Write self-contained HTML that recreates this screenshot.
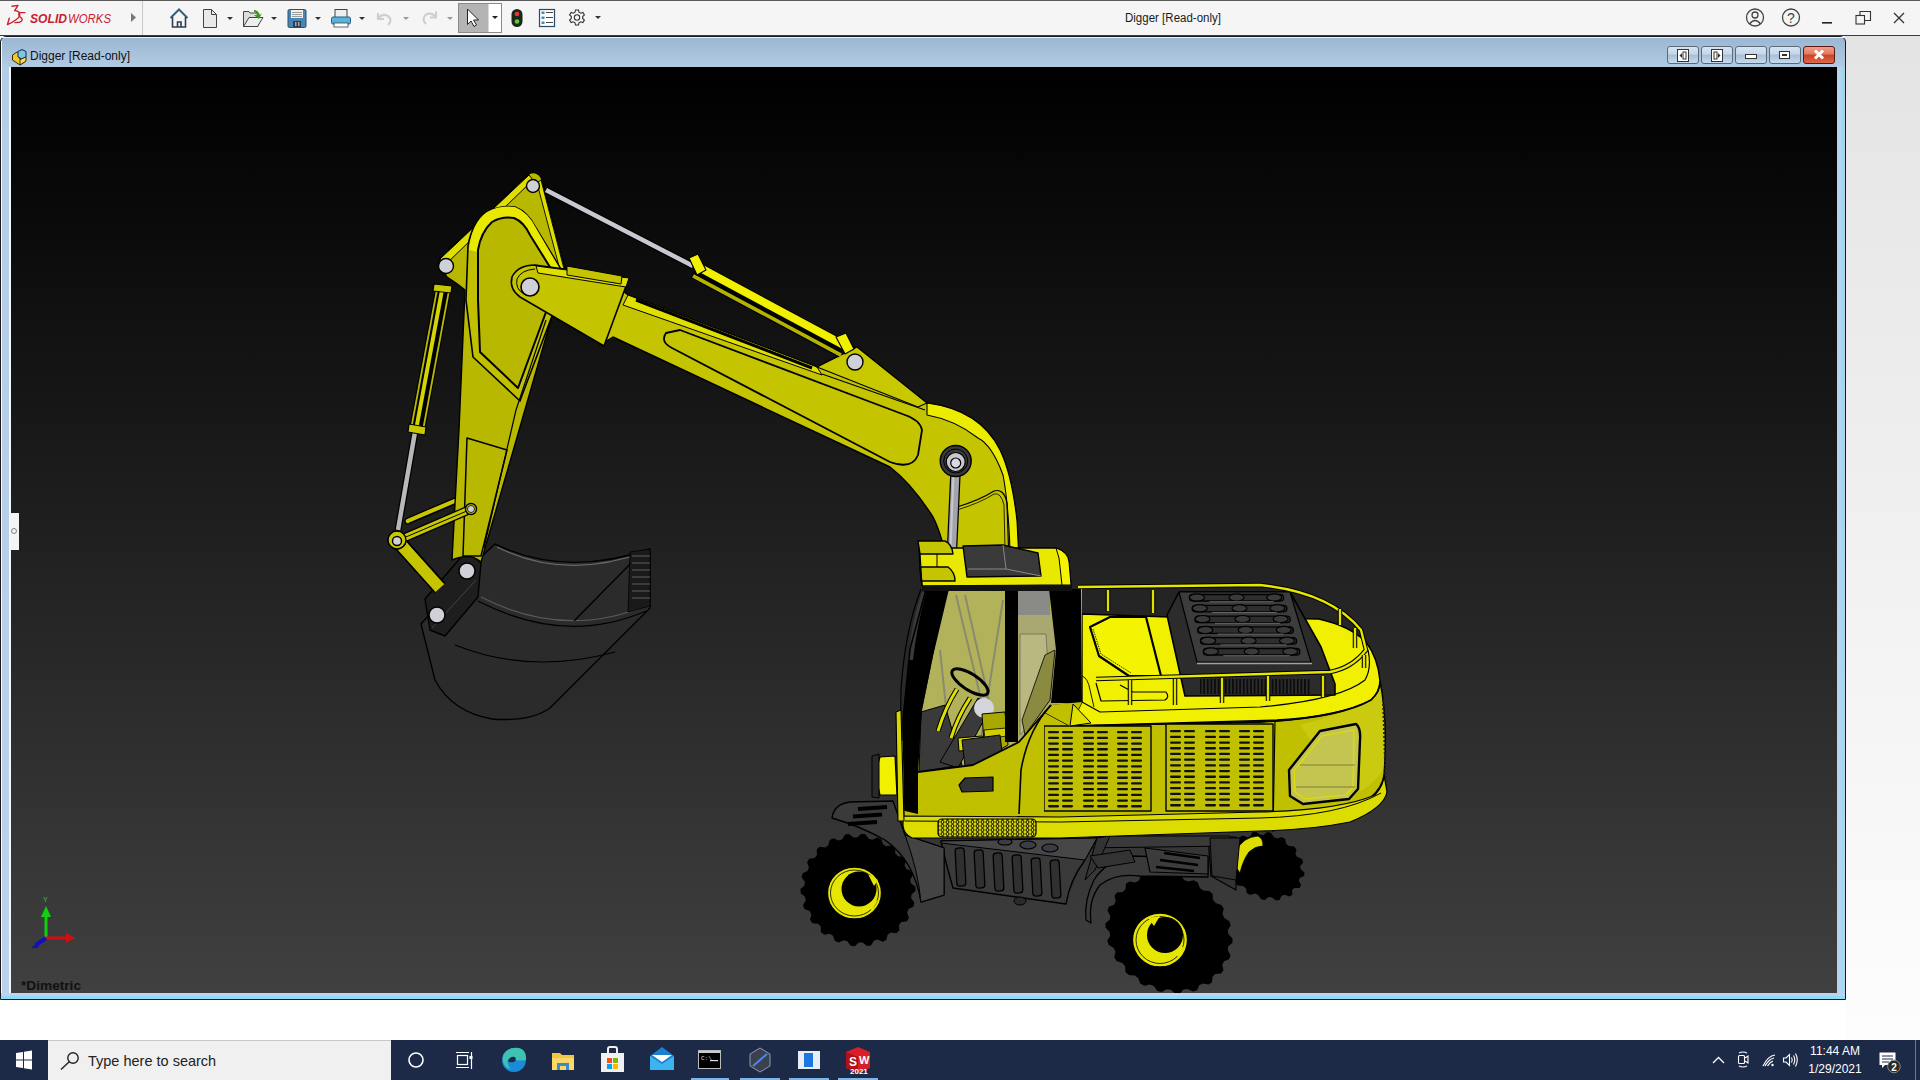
<!DOCTYPE html>
<html><head><meta charset="utf-8">
<style>
*{margin:0;padding:0;box-sizing:border-box}
html,body{width:1920px;height:1080px;overflow:hidden;background:#fff;font-family:"Liberation Sans",sans-serif}
.abs{position:absolute}
#top{left:0;top:0;width:1920px;height:36px;background:#f5f5f5;border-bottom:1px solid #3c3c3c}
#rightgray{left:1845px;top:36px;width:75px;height:1004px;background:linear-gradient(#e4e4e4,#fdfdfd)}
#frame{left:0;top:36px;width:1846px;height:964px;background:linear-gradient(#9ab6d2 0px,#b4cce4 31px,#bcd2ea 100%);border:1px solid #1a1a1a;border-radius:6px 6px 0 0}
#vp{left:11px;top:67px;width:1826px;height:926px;background:linear-gradient(#000 0%,#1c1c1c 45%,#404040 100%);overflow:hidden}
#task{left:0;top:1040px;width:1920px;height:40px;background:#1c2a48}
.t{position:absolute;white-space:nowrap}
</style></head><body>
<div id="rightgray" class="abs"></div>
<div id="top" class="abs">
<svg class="abs" style="left:0;top:0" width="1920" height="36" viewBox="0 0 1920 36">
<rect x="0" y="0" width="1920" height="1" fill="#5a5a5a"/>
<!-- 3DS logo -->
<g fill="none" stroke="#c8202e" stroke-width="1.4" stroke-linecap="round" stroke-linejoin="round">
<path d="M12,6.2 L18,5.4 L14.8,10.4"/>
<path d="M14.8,10.6 Q20.5,11 19.6,15.6 Q18.5,19.5 7.4,24.6 L9.3,18.2"/>
<path d="M25,12.6 L20.3,12.6 Q17.6,13.6 19.6,16.4 L21.8,18.4 Q23,21 19.6,22.2 L15,22.6"/>
</g>
<text x="30" y="23" font-family="Liberation Sans" font-weight="bold" font-style="italic" font-size="13.5" fill="#c8202e" textLength="37" lengthAdjust="spacingAndGlyphs">SOLID</text>
<text x="68" y="23" font-family="Liberation Sans" font-style="italic" font-size="13.5" fill="#c8202e" textLength="43" lengthAdjust="spacingAndGlyphs">WORKS</text>
<path d="M131,13 L136,17.5 L131,22 Z" fill="#777"/>
<rect x="142" y="1" width="1" height="34" fill="#c8c8c8"/>
<!-- home -->
<g fill="none" stroke="#2d3e50" stroke-width="1.6">
<path d="M170.5,18 L179,9.5 L187.5,18" stroke="#34607f" stroke-width="2"/>
<path d="M172.5,17 V27 H185.5 V17"/>
<path d="M177.5,27 V22 H181 V27"/>
</g>
<!-- new doc -->
<path d="M203.5,9.5 H211.5 L216.5,14.5 V27.5 H203.5 Z" fill="#e9e9e9" stroke="#444" stroke-width="1"/>
<path d="M211.5,9.5 V14.5 H216.5" fill="none" stroke="#444" stroke-width="1"/>
<path d="M227,17 L233,17 L230,20 Z" fill="#333"/>
<!-- open -->
<path d="M243.5,11.5 H249 L250,13 H258 V26.5 H243.5 Z" fill="#ddd" stroke="#444"/>
<path d="M243.5,26.5 L249,17.5 H263 L257.5,26.5 Z" fill="#eee" stroke="#444"/>
<path d="M254,10 Q258,10 260,15 L262,13 L259,19 L254,15 L257,15 Q256,12 254,12 Z" fill="#3a9a1a"/>
<path d="M271,17 L277,17 L274,20 Z" fill="#333"/>
<!-- save -->
<rect x="288" y="9.5" width="18" height="18" rx="1.5" fill="#4a86b4" stroke="#2c4f6e"/>
<rect x="291" y="10" width="12" height="8" fill="#f0f0f0"/>
<path d="M292,12.5 H302 M292,14.5 H302 M292,16.5 H302" stroke="#888" stroke-width="0.8"/>
<rect x="293" y="21" width="8" height="6" fill="#2c3e50"/>
<rect x="295" y="22" width="1.5" height="4" fill="#aaa"/><rect x="298" y="22" width="1.5" height="4" fill="#aaa"/>
<path d="M315,17 L321,17 L318,20 Z" fill="#333"/>
<!-- print -->
<rect x="335" y="9.5" width="12" height="8" fill="#eee" stroke="#444"/>
<rect x="331.5" y="17" width="19" height="7" rx="1.5" fill="#58b4dc" stroke="#2a5e80"/>
<rect x="334" y="23" width="14" height="4" fill="#fff" stroke="#444" stroke-width="0.8"/>
<path d="M359,17 L365,17 L362,20 Z" fill="#333"/>
<!-- undo -->
<path d="M378,13 L378,19 L384,19 M378.5,18.5 Q382,13 388,16 Q393,20 388,25" fill="none" stroke="#cfcfcf" stroke-width="2.2"/>
<path d="M403,17 L409,17 L406,20 Z" fill="#999"/>
<!-- redo -->
<path d="M436,11.5 L436,17.5 L430,17.5 M435.5,17 Q432,12 426,14.5 Q421,19 426,24" fill="none" stroke="#cfcfcf" stroke-width="2.2"/>
<path d="M447,17 L453,17 L450,20 Z" fill="#999"/>
<!-- select -->
<rect x="458.5" y="3.5" width="43" height="29" fill="#fff" stroke="#8a8a8a"/>
<rect x="459" y="4" width="29.5" height="28" fill="#b4b4b4"/>
<path d="M467.5,9 V24.5 L471,21 L474,26.5 L476.5,25 L473.5,20 L478.5,20 Z" fill="#fff" stroke="#222" stroke-width="1"/>
<path d="M492,16 L498,16 L495,19 Z" fill="#222"/>
<!-- traffic light -->
<rect x="511.5" y="9" width="11" height="18" rx="5.5" fill="#1a2a1a"/>
<circle cx="517" cy="14" r="2.3" fill="#e33"/>
<circle cx="517" cy="21.5" r="2.3" fill="#6c3"/>
<!-- options list -->
<rect x="539.5" y="9.5" width="15" height="17" fill="#fff" stroke="#2a4a6a" stroke-width="1.2"/>
<rect x="541.5" y="11.5" width="3" height="2.5" fill="#4a8ab4"/><rect x="541.5" y="16.5" width="3" height="2.5" fill="#4a8ab4"/><rect x="541.5" y="21.5" width="3" height="2.5" fill="#4a8ab4"/>
<path d="M546,12.5 H553 M546,17.5 H553 M546,22.5 H553" stroke="#333" stroke-width="0.9"/>
<!-- gear -->
<g transform="translate(577,17.5)" fill="none" stroke="#333" stroke-width="1.1">
<path d="M-1.5,-7.5 H1.5 L2,-5.3 L3.8,-4.3 L5.9,-5.1 L7.4,-2.5 L5.7,-1 V1 L7.4,2.5 L5.9,5.1 L3.8,4.3 L2,5.3 L1.5,7.5 H-1.5 L-2,5.3 L-3.8,4.3 L-5.9,5.1 L-7.4,2.5 L-5.7,1 V-1 L-7.4,-2.5 L-5.9,-5.1 L-3.8,-4.3 L-2,-5.3 Z"/>
<circle r="2.7"/>
</g>
<path d="M595,16 L601,16 L598,19 Z" fill="#333"/>
<!-- title -->
<text x="1125" y="22" font-family="Liberation Sans" font-size="12.5" fill="#1a1a1a" textLength="96" lengthAdjust="spacingAndGlyphs">Digger [Read-only]</text>
<!-- user -->
<g fill="none" stroke="#444" stroke-width="1.3">
<circle cx="1755" cy="17.5" r="8.5"/>
<circle cx="1755" cy="15" r="3"/>
<path d="M1749.5,24 Q1755,17 1760.5,24"/>
<circle cx="1791" cy="17.5" r="8.5"/>
</g>
<text x="1791" y="22.5" text-anchor="middle" font-family="Liberation Sans" font-size="14" fill="#444">?</text>
<rect x="1822" y="22" width="10" height="1.6" fill="#222"/>
<g fill="none" stroke="#333" stroke-width="1.1">
<rect x="1856" y="15.5" width="8.5" height="8.5"/>
<path d="M1860,15.5 V11.5 H1870.5 V20.5 H1864.5"/>
<path d="M1894,13 L1904,23 M1904,13 L1894,23" stroke-width="1.3"/>
</g>
</svg>
</div>
<div id="frame" class="abs">
<svg class="abs" style="left:-1px;top:-1px" width="1846" height="40" viewBox="0 0 1846 40">
<defs>
<linearGradient id="closeg" x1="0" y1="0" x2="0" y2="1"><stop offset="0" stop-color="#f0a090"/><stop offset="0.45" stop-color="#e07a60"/><stop offset="0.5" stop-color="#c84420"/><stop offset="1" stop-color="#e06a50"/></linearGradient>
<linearGradient id="btng" x1="0" y1="0" x2="0" y2="1"><stop offset="0" stop-color="#d8e6f4"/><stop offset="0.45" stop-color="#c4d6ea"/><stop offset="0.5" stop-color="#a8bed6"/><stop offset="1" stop-color="#c8dcf0"/></linearGradient>
</defs>
<rect x="1" y="1" width="1844" height="1" fill="#e8f2fb"/>
<!-- part icon -->
<g transform="translate(11,49) translate(0,-37)">
<path d="M1.5,7 L6,4 L9,5.5 L9,11.5 L13.5,14 L9,17 L1.5,12 Z" fill="#f2c82a" stroke="#3a2a00" stroke-width="1"/>
<path d="M7,3.5 L11,1.5 L15,3.5 L15,9 L11,11 L7,9 Z" fill="#7cc8e0" stroke="#0a2a6a" stroke-width="1"/>
<path d="M9,11.5 L15,9 L15,13 L9,17 Z" fill="#f8e060" stroke="#3a2a00" stroke-width="1"/>
</g>
<text x="30" y="23.5" font-family="Liberation Sans" font-size="12.5" fill="#111" textLength="100" lengthAdjust="spacingAndGlyphs">Digger [Read-only]</text>
<g id="mdibtns" stroke="#5a6a7a" stroke-width="1">
<rect x="1667.5" y="10.5" width="31" height="17" rx="2.5" fill="url(#btng)"/>
<rect x="1701.5" y="10.5" width="31" height="17" rx="2.5" fill="url(#btng)"/>
<rect x="1735.5" y="10.5" width="31" height="17" rx="2.5" fill="url(#btng)"/>
<rect x="1769.5" y="10.5" width="31" height="17" rx="2.5" fill="url(#btng)"/>
<rect x="1803.5" y="10.5" width="31" height="17" rx="2.5" fill="url(#closeg)" stroke="#5a1a10"/>
</g>
<g fill="#fff" stroke="#333" stroke-width="1">
<rect x="1677.5" y="13.5" width="11" height="12"/>
<rect x="1711.5" y="13.5" width="11" height="12"/>
<rect x="1745.5" y="18.5" width="11" height="4"/>
<rect x="1779.5" y="15.5" width="10" height="7"/>
</g>
<g fill="#333">
<path d="M1682,17 L1679.5,19.5 L1682,22 Z"/><rect x="1683" y="16" width="3" height="7" fill="none" stroke="#333" stroke-width="1"/>
<path d="M1718,17 L1720.5,19.5 L1718,22 Z"/><rect x="1714" y="16" width="3" height="7" fill="none" stroke="#333" stroke-width="1"/>
<rect x="1782" y="18" width="5" height="2"/>
</g>
<path d="M1815,14.5 L1823,22.5 M1823,14.5 L1815,22.5" stroke="#fff" stroke-width="3"/>
</svg>
<div class="abs" style="left:0;top:4px;width:1px;height:956px;background:#f4fcff"></div>
<div class="abs" style="left:8px;top:30px;width:2px;height:927px;background:#eef8ff"></div>
<div class="abs" style="left:0;top:956px;width:1844px;height:4px;background:linear-gradient(#c4d0f0,#c0d4f0)"></div>
<div class="abs" style="left:0;top:959px;width:1844px;height:3px;background:#90dcf8"></div>
<div class="abs" style="left:1833px;top:30px;width:9px;height:927px;background:linear-gradient(90deg,#bcd2ea,#b8d4ec 70%,#90dcf8)"></div>
</div>
<div id="vp" class="abs">
<svg class="abs" style="left:-11px;top:-67px" width="1920" height="1080" viewBox="0 0 1920 1080">
<defs>
<pattern id="slots" x="1047" y="729" width="17" height="5" patternUnits="userSpaceOnUse">
<rect x="1" y="1.2" width="6.5" height="2.2" rx="1" fill="#111"/>
<rect x="8.5" y="1.2" width="6.5" height="2.2" rx="1" fill="#111"/>
</pattern>
<pattern id="mesh" width="5" height="4" patternUnits="userSpaceOnUse">
<rect width="5" height="4" fill="#d8d800"/><circle cx="2.5" cy="2" r="1.5" fill="none" stroke="#000" stroke-width="1"/>
</pattern>
<pattern id="oval" x="1175" y="597" width="40" height="11" patternUnits="userSpaceOnUse">
<rect width="40" height="11" fill="#444"/><rect x="3" y="2" width="34" height="7" rx="3.5" fill="none" stroke="#111" stroke-width="1.3"/>
</pattern>
<pattern id="vslat" width="3.6" height="20" patternUnits="userSpaceOnUse">
<rect width="3.6" height="20" fill="#2c2c2c"/><rect x="1" width="1.5" height="20" fill="#050505"/>
</pattern>
</defs>
<g stroke="#000" stroke-width="1.4" stroke-linejoin="round">

<!-- ===== BUCKET ===== -->
<path d="M495,544 Q565,578 650,549 L650,608 L550,708 Q530,722 492,719 Q452,712 435,680 L421,624 L478,560 Z" fill="#2b2b2b"/>
<path d="M497,547 Q565,581 645,552" fill="none" stroke="#6a6a6a" stroke-width="1.2"/>
<path d="M481,597 Q565,640 648,605" fill="none" stroke="#5a5a5a" stroke-width="1.2"/>
<path d="M478,601 Q565,646 646,611" fill="none" stroke="#000" stroke-width="1.3"/>
<path d="M455,645 Q530,675 615,652" fill="none" stroke="#000" stroke-width="1.2"/>
<path d="M574,621 L642,552" fill="none" stroke="#000" stroke-width="1.4"/>
<path d="M630,552 L650,549 L650,606 L628,612 Z" fill="#1a1a1a" stroke="#000" stroke-width="0.8"/>
<path d="M632,556 H650 M632,563 H650 M632,570 H650 M632,577 H650 M632,584 H650 M632,591 H650 M632,598 H650" stroke="#666" stroke-width="0.9"/>
<!-- bucket link block -->
<path d="M425,599 L462,556 Q472,552 481,563 L478,597 L445,636 L430,630 Z" fill="#1e1e1e"/>
<path d="M432,628 L476,580" stroke="#444" stroke-width="1" fill="none"/>
<circle cx="467" cy="571" r="8" fill="#d0d0d8" stroke="#000" stroke-width="1.5"/>
<circle cx="437" cy="615" r="8" fill="#d0d0d8" stroke="#000" stroke-width="1.5"/>

<!-- ===== STICK CYLINDER (left) ===== -->
<path d="M398,530 L415,432" stroke="#000" stroke-width="7" fill="none"/>
<path d="M398,530 L415,432" stroke="#b8b8b8" stroke-width="4.5" fill="none"/>
<path d="M443,290 L417,430" stroke="#000" stroke-width="16" fill="none"/>
<path d="M442,290 L416,430" stroke="#d4d400" stroke-width="4" fill="none"/>
<path d="M437.1,289 L411.1,429" stroke="#b8b800" stroke-width="1.8" fill="none"/>
<path d="M448.9,291 L422.9,431" stroke="#b8b800" stroke-width="1.8" fill="none"/>
<path d="M434,284 L452,286 L451,293 L433,291 Z" fill="#c8c800" stroke-width="1.2"/>
<path d="M409,424 L426,427 L425,435 L408,432 Z" fill="#c8c800" stroke-width="1.2"/>
<!-- link bars -->
<path d="M408,521 L455,501" stroke="#000" stroke-width="7" fill="none" stroke-linecap="round"/>
<path d="M408,521 L455,501" stroke="#c8c800" stroke-width="4.5" fill="none" stroke-linecap="round"/>
<path d="M409,523 L455,503.5" stroke="#000" stroke-width="0.8" fill="none"/>
<path d="M397,540 L440,588" stroke="#000" stroke-width="15" fill="none"/>
<path d="M397,540 L440,588" stroke="#c4c400" stroke-width="12" fill="none"/>
<path d="M402,536 L444,583" stroke="#000" stroke-width="1.2" fill="none"/>
<circle cx="397" cy="540" r="9" fill="#c8c800" stroke="#000"/>
<circle cx="397" cy="541" r="4.5" fill="#d0d0d8" stroke="#000"/>

<!-- ===== STICK ===== -->
<path d="M529,174 Q535,170 541,177 L565,269 L552,316 L481,562 Q470,552 452,560 L459,430 L465,290 Q458,284 447,277 L438,264 L440,258 Z" fill="#b8b800"/>
<path d="M440,259 L529,175 L533,180 L445,265 Z" fill="#dede00" stroke-width="1"/>
<path d="M541,180 L564,269 L560,270 L537,183 Z" fill="#dede00" stroke-width="0.9"/>
<path d="M466,300 L468,246 Q472,222 487,212 Q500,205 515,207 Q528,212 536,228 L562,271 L552,316 L521,398 L520,401 L473,357 Z" fill="#c0c000" stroke-width="1.6"/>
<path d="M469,250 Q472,222 487,212 Q500,205 515,207 Q528,212 536,228 L560,269 L553,272 L530,235 Q524,222 514,218 Q502,216 492,222 Q481,232 478,252 Z" fill="#e8e800" stroke="none"/>
<path d="M478,300 L478,250 Q481,232 492,222 Q502,216 514,218 Q524,222 530,235 L553,272 L546,312 L518,388 L480,352 Z" fill="#b8b800" stroke-width="2"/>

<path d="M467,438 L507,450 L481,556 L463,556 Z" fill="#b8b800" stroke-width="1.5"/>
<path d="M546,320 L516,410 L484,548" fill="none" stroke-width="1.2"/>
<circle cx="533" cy="186" r="6.5" fill="#d0d0d8" stroke="#000"/>
<circle cx="446" cy="266" r="7.5" fill="#d0d0d8" stroke="#000"/>
<path d="M397,541 L471,509" stroke="#000" stroke-width="9" fill="none" stroke-linecap="round"/>
<path d="M397,541 L471,509" stroke="#c8c800" stroke-width="6.5" fill="none" stroke-linecap="round"/>
<path d="M400,539.5 L468,510.5" stroke="#000" stroke-width="1" fill="none"/>
<circle cx="471" cy="509" r="5.5" fill="#c8c800" stroke="#000"/>
<circle cx="471" cy="509" r="3.5" fill="#d0d0d8" stroke="#000" stroke-width="0.8"/>
<circle cx="397" cy="540" r="9" fill="#c8c800" stroke="#000"/>
<circle cx="397" cy="541" r="4.5" fill="#d0d0d8" stroke="#000"/>

<!-- ===== BOOM CYLINDER ROD ===== -->
<path d="M546,190 L693,266" stroke="#000" stroke-width="7" fill="none"/>
<path d="M546,190 L693,266" stroke="#c8c8d0" stroke-width="4.5" fill="none"/>

<!-- ===== BOOM ===== -->
<path d="M600,272 L628,295 L817,367 L857,347 L927,403 Q980,410 1000,450 Q1012,475 1017,521 L1019,560 L947,560 Q940,530 933,517 Q912,484 890,467 L613,337 L600,345 Z" fill="#c4c400"/>
<path d="M628,295 L817,367 L822,375 L623,305 Z" fill="#e0e000" stroke-width="1"/>
<path d="M636,300 L812,368" fill="none" stroke-width="3"/>
<path d="M817,367 L857,347 L927,403 L918,407 Z" fill="#c8c800" stroke-width="1.2"/>
<path d="M822,374 L925,410" fill="none" stroke-width="1.2"/>
<path d="M666,333 Q660,342 672,348 L890,462 Q912,470 918,455 L922,430 Q920,420 905,415 L680,330 Z" fill="none" stroke-width="1.8"/>
<path d="M927,403 Q980,410 1000,450 Q1012,475 1017,521 L1019,560 L1010,560 L1010,549 Q1008,500 1003,475 Q992,445 978,438 Q955,420 927,415 Z" fill="#ecec00" stroke-width="1.1"/>
<path d="M957,507 Q980,500 994,491 Q1004,488 1007,503 L1008.5,548" fill="none" stroke-width="1.2"/>
<path d="M957,510 Q980,503 994,494 Q1001,492 1004,505 L1005,548" fill="none" stroke-width="0.8"/>
<circle cx="855" cy="362" r="8" fill="#d0d0d8" stroke="#000"/>
<!-- boom joint piece -->
<path d="M535,265 L629,278 L604,346 L520,297 Q509,289 512,277 Q518,265 535,265 Z" fill="#c4c400" stroke-width="1.6"/>
<path d="M535,269 Q521,270 517,279 Q515,289 524,294" fill="none" stroke-width="1"/>
<path d="M536,266 L629,278 L626,287 L538,273 Z" fill="#dede00" stroke-width="1"/>
<path d="M567,266 L622,276 L621,284 L567,275 Z" fill="#c4c400" stroke-width="1"/>
<circle cx="530" cy="287" r="9" fill="#d0d0d8" stroke="#000" stroke-width="1.6"/>
<!-- boom cylinder barrel -->
<path d="M695,270 L843,349.5" stroke="#000" stroke-width="18" fill="none"/>
<path d="M697,266.3 L845,345.8" stroke="#f0f000" stroke-width="8" fill="none"/>
<path d="M693,275.8 L841,355.2" stroke="#b4b400" stroke-width="3.6" fill="none"/>
<path d="M689,258 L698,254 L706,270 L697,275 Z" fill="#f0f000" stroke-width="1.2"/>
<path d="M836,337 L846,333 L854,349 L845,354 Z" fill="#f0f000" stroke-width="1.2"/>
<!-- swing cylinder -->
<path d="M955.5,472 L952,550" stroke="#000" stroke-width="10.5" fill="none"/>
<path d="M955.5,472 L952,550" stroke="#a4a4ac" stroke-width="8" fill="none"/>
<path d="M953.5,474 L950.5,548" stroke="#c8c8d0" stroke-width="2" fill="none"/>
<circle cx="955.7" cy="461" r="15.5" fill="#3a3a3a" stroke="#000" stroke-width="1.4"/>
<circle cx="955.7" cy="461" r="12" fill="none" stroke="#000" stroke-width="1"/>
<circle cx="955.7" cy="462" r="9.5" fill="#c8c8d0" stroke="#000" stroke-width="1.2"/>
<circle cx="955.7" cy="463" r="5" fill="#d8d8e0" stroke="#000" stroke-width="1.2"/>
<!-- ===== UNDERCARRIAGE ===== -->
<!-- rear right wheel -->
<path d="M1208,837 L1236,837 L1236,890 L1211,876 Z" fill="#333" stroke-width="1.2"/>
<path d="M1301.1,885.2 L1299.4,887.9 L1294.2,888.0 L1292.1,890.1 L1292.4,894.8 L1289.5,896.6 L1284.4,894.8 L1281.4,895.9 L1279.6,900.0 L1276.0,900.6 L1271.7,897.3 L1268.3,897.1 L1264.8,900.1 L1261.1,899.3 L1258.2,894.9 L1254.9,893.6 L1250.2,895.0 L1246.8,892.9 L1245.9,888.2 L1243.2,885.9 L1237.9,885.4 L1235.5,882.5 L1236.6,878.1 L1235.0,875.2 L1230.0,872.9 L1228.8,869.5 L1231.8,866.1 L1231.4,863.1 L1227.5,859.4 L1227.8,856.1 L1232.2,854.2 L1233.2,851.4 L1230.9,846.8 L1232.6,844.1 L1237.8,844.0 L1239.9,841.9 L1239.6,837.2 L1242.5,835.4 L1247.6,837.2 L1250.6,836.1 L1252.4,832.0 L1256.0,831.4 L1260.3,834.7 L1263.7,834.9 L1267.2,831.9 L1270.9,832.7 L1273.8,837.1 L1277.1,838.4 L1281.8,837.0 L1285.2,839.1 L1286.1,843.8 L1288.8,846.1 L1294.1,846.6 L1296.5,849.5 L1295.4,853.9 L1297.0,856.8 L1302.0,859.1 L1303.2,862.5 L1300.2,865.9 L1300.6,868.9 L1304.5,872.6 L1304.2,875.9 L1299.8,877.8 L1298.8,880.6 Z" fill="#000" stroke="none"/>
<path d="M1258,836 Q1243,837 1236,851 Q1232,864 1240,873 Q1243,860 1249,852 Q1255,846 1263,846 Q1263,838 1258,836 Z" fill="#dede00" stroke-width="0.8"/>
<!-- axle beam -->
<path d="M1080,836 L1230,836 L1232,846 L1080,848 Z" fill="#3a3a3a" stroke-width="1"/>
<path d="M1210,838 L1240,838 L1236,880 L1212,876 Z" fill="#333" stroke-width="1"/>
<!-- chassis body -->
<path d="M941,841 L1097,838 L1085,860 Q1070,880 1066,904 L953,888 Q945,860 941,841 Z" fill="#3a3a3a"/>
<path d="M941,841 L1097,838 L1085,860 L941,843 Z" fill="#474747" stroke-width="1"/>
<g fill="#303030" stroke-width="1.3">
<rect x="956" y="848" width="9" height="38" rx="3" transform="rotate(-3 960 867)"/>
<rect x="975" y="850" width="9" height="38" rx="3" transform="rotate(-3 979 869)"/>
<rect x="994" y="853" width="9" height="38" rx="3" transform="rotate(-3 998 872)"/>
<rect x="1013" y="855" width="9" height="38" rx="3" transform="rotate(-3 1017 874)"/>
<rect x="1032" y="858" width="9" height="38" rx="3" transform="rotate(-3 1036 877)"/>
<rect x="1051" y="860" width="9" height="38" rx="3" transform="rotate(-3 1055 879)"/>
</g>
<ellipse cx="1028" cy="845" rx="8" ry="4" fill="#3c3c44" stroke-width="1.2"/>
<ellipse cx="1050" cy="848" rx="8" ry="4" fill="#3c3c44" stroke-width="1.2"/>
<ellipse cx="1005" cy="842" rx="7" ry="3" fill="#3c3c44" stroke-width="1.2"/>
<ellipse cx="1020" cy="901" rx="6" ry="4" fill="#2a2a2a" stroke-width="1"/>
<path d="M1097,838 L1110,836 L1095,870 L1085,880 Z" fill="#333" stroke-width="1"/>
<!-- left front wheel -->
<path d="M908.9,917.8 L906.9,921.2 L901.3,922.1 L899.0,925.0 L899.3,930.5 L896.3,933.2 L890.7,932.6 L887.6,934.7 L886.3,940.0 L882.7,941.7 L877.4,939.5 L873.8,940.7 L871.0,945.4 L867.0,946.0 L862.6,942.5 L858.8,942.6 L854.7,946.3 L850.6,945.8 L847.4,941.2 L843.6,940.2 L838.7,942.6 L834.9,941.0 L833.0,935.8 L829.7,933.8 L824.2,934.7 L820.9,932.1 L820.7,926.6 L818.0,923.8 L812.4,923.2 L810.0,919.8 L811.4,914.5 L809.6,911.1 L804.4,908.9 L803.0,905.1 L805.8,900.4 L805.1,896.7 L800.7,893.2 L800.5,889.1 L804.5,885.5 L804.9,881.7 L801.6,877.2 L802.6,873.3 L807.5,870.9 L808.9,867.4 L807.1,862.2 L809.1,858.8 L814.7,857.9 L817.0,855.0 L816.7,849.5 L819.7,846.8 L825.3,847.4 L828.4,845.3 L829.7,840.0 L833.3,838.3 L838.6,840.5 L842.2,839.3 L845.0,834.6 L849.0,834.0 L853.4,837.5 L857.2,837.4 L861.3,833.7 L865.4,834.2 L868.6,838.8 L872.4,839.8 L877.3,837.4 L881.1,839.0 L883.0,844.2 L886.3,846.2 L891.8,845.3 L895.1,847.9 L895.3,853.4 L898.0,856.2 L903.6,856.8 L906.0,860.2 L904.6,865.5 L906.4,868.9 L911.6,871.1 L913.0,874.9 L910.2,879.6 L910.9,883.3 L915.3,886.8 L915.5,890.9 L911.5,894.5 L911.1,898.3 L914.4,902.8 L913.4,906.7 L908.5,909.1 L907.1,912.6 Z" fill="#000" stroke="none"/>
<ellipse cx="854.5" cy="893" rx="27" ry="26" fill="#e6e600" stroke="#000" stroke-width="1.3"/>
<ellipse cx="854.5" cy="893" rx="24" ry="23" fill="none" stroke="#000" stroke-width="0.8"/>
<circle cx="859" cy="889" r="17.5" fill="#000" stroke="none"/>
<path d="M868,874 L878,880 L874,886 Z M866,907 L878,900 L872,910 Z" fill="#e6e600" stroke="none"/>
<!-- left fender -->
<path d="M832,818 Q834,804 850,802 L893,801 L905,835 L944,848 L944,895 L921,902 Q914,860 885,840 Q860,826 832,818 Z" fill="#3a3a3a"/>
<path d="M905,835 L944,848 L944,895 L921,902 Q918,870 905,835 Z" fill="#444" stroke-width="1"/>
<path d="M858,809 L887,807 M853,816.5 L882,814.5 M848,824 L877,822" stroke-width="4" fill="none"/>
<!-- right front wheel -->
<path d="M1223.5,970.3 L1221.0,973.6 L1215.3,974.1 L1212.5,976.8 L1212.0,982.2 L1208.6,984.6 L1202.8,983.5 L1199.2,985.3 L1197.1,990.2 L1193.0,991.5 L1187.5,988.9 L1183.4,989.6 L1179.9,993.6 L1175.4,993.7 L1170.8,989.8 L1166.5,989.2 L1161.8,992.0 L1157.4,990.9 L1153.9,986.0 L1149.8,984.4 L1144.3,985.7 L1140.2,983.4 L1138.2,978.0 L1134.7,975.4 L1128.8,975.1 L1125.4,971.9 L1125.1,966.3 L1122.3,962.9 L1116.6,961.1 L1114.2,957.2 L1115.5,951.9 L1113.7,948.0 L1108.6,944.8 L1107.3,940.5 L1110.2,936.0 L1109.6,931.9 L1105.5,927.5 L1105.5,923.2 L1109.7,919.8 L1110.3,915.9 L1107.5,910.7 L1108.8,906.8 L1114.0,904.7 L1115.8,901.3 L1114.5,895.7 L1117.0,892.4 L1122.7,891.9 L1125.5,889.2 L1126.0,883.8 L1129.4,881.4 L1135.2,882.5 L1138.8,880.7 L1140.9,875.8 L1145.0,874.5 L1150.5,877.1 L1154.6,876.4 L1158.1,872.4 L1162.6,872.3 L1167.2,876.2 L1171.5,876.8 L1176.2,874.0 L1180.6,875.1 L1184.1,880.0 L1188.2,881.6 L1193.7,880.3 L1197.8,882.6 L1199.8,888.0 L1203.3,890.6 L1209.2,890.9 L1212.6,894.1 L1212.9,899.7 L1215.7,903.1 L1221.4,904.9 L1223.8,908.8 L1222.5,914.1 L1224.3,918.0 L1229.4,921.2 L1230.7,925.5 L1227.8,930.0 L1228.4,934.1 L1232.5,938.5 L1232.5,942.8 L1228.3,946.2 L1227.7,950.1 L1230.5,955.3 L1229.2,959.2 L1224.0,961.3 L1222.2,964.7 Z" fill="#000" stroke="none"/>
<ellipse cx="1160" cy="940" rx="27.5" ry="27" fill="#e6e600" stroke="#000" stroke-width="1.3"/>
<ellipse cx="1160" cy="940" rx="24" ry="23.5" fill="none" stroke="#000" stroke-width="0.8"/>
<circle cx="1165" cy="935" r="18" fill="#000" stroke="none"/>
<path d="M1148,918 L1160,916 L1154,926 Z M1172,954 L1184,946 L1180,957 Z" fill="#e6e600" stroke="none"/>
<!-- right fender -->
<path d="M1091,923 Q1088,900 1100,885 Q1115,873 1140,876 L1208,877 L1208,858 L1130,856 Q1105,862 1094,880 Q1084,900 1086,920 Z" fill="#3a3a3a" stroke-width="1.3"/>
<path d="M1145,848 L1208,856 L1208,874 L1150,872 Z" fill="#3c3c3c" stroke-width="1.2"/>
<path d="M1164,853 L1200,858 M1160,860 L1198,865 M1156,867 L1194,871" stroke-width="2.5" fill="none"/>
<path d="M1090,856 L1130,850 L1135,862 L1098,868 Z" fill="#333" stroke-width="1"/>

<!-- ===== BODY ===== -->
<!-- side wall -->
<path d="M1044,712 L1070,726 L1260,722 Q1340,718 1371,700 Q1380,692 1380,681 Q1388,720 1384,775 Q1380,800 1340,813 L1260,818 L1060,822 L904,820 L901,740 Z" fill="#c0c000"/>
<path d="M1300,725 Q1360,710 1380,690 Q1386,730 1383,770 Q1370,790 1350,795 Z" fill="#caca10" stroke="none"/>
<!-- deck top + rim -->
<path d="M1082,614 L1169,617 L1319,619 Q1350,626 1366,642 Q1378,658 1380,681 Q1380,692 1371,700 Q1340,716 1277,720 L1070,726 L1082,702 Z" fill="#f0f000"/>
<path d="M1082,702 L1100,712 L1260,707 Q1340,700 1365,680 Q1372,668 1368,650" fill="none" stroke-width="1.2"/>
<path d="M1070,726 L1260,722 Q1340,718 1371,700 Q1380,692 1380,681" fill="none" stroke-width="1.6"/>
<path d="M1275,720 L1273,832" fill="none" stroke-width="1.2"/>
<!-- deck hatch -->
<path d="M1090,627 L1110,617 L1146,617 L1161,676 L1129,676 L1099,656 Z" fill="#f4f400" stroke-width="2.2"/>
<path d="M1093,629 L1101,654 L1131,673" fill="none" stroke="#000" stroke-width="0.8" stroke-dasharray="1.5 1"/>
<path d="M1096,683 L1101,701 L1165,700 Q1170,697 1166,692 L1133,692 L1120,685" fill="none" stroke-width="1.2"/>
<path d="M1082,676 Q1088,678 1090,690 L1094,707" fill="none" stroke-width="0.9"/>
<!-- grille panels -->
<rect x="1044" y="726" width="107" height="85" fill="#c0c000" stroke-width="1.4"/>
<rect x="1166" y="724" width="107" height="87" fill="#c0c000" stroke-width="1.4"/>
<g fill="#111" stroke="none"><rect x="1048" y="731.0" width="11" height="2.3" rx="1.1"/><rect x="1048" y="736.7" width="11" height="2.3" rx="1.1"/><rect x="1048" y="742.4" width="11" height="2.3" rx="1.1"/><rect x="1048" y="748.1" width="11" height="2.3" rx="1.1"/><rect x="1048" y="753.8" width="11" height="2.3" rx="1.1"/><rect x="1048" y="759.5" width="11" height="2.3" rx="1.1"/><rect x="1048" y="765.2" width="11" height="2.3" rx="1.1"/><rect x="1048" y="770.9" width="11" height="2.3" rx="1.1"/><rect x="1048" y="776.6" width="11" height="2.3" rx="1.1"/><rect x="1048" y="782.3" width="11" height="2.3" rx="1.1"/><rect x="1048" y="788.0" width="11" height="2.3" rx="1.1"/><rect x="1048" y="793.7" width="11" height="2.3" rx="1.1"/><rect x="1048" y="799.4" width="11" height="2.3" rx="1.1"/><rect x="1048" y="805.1" width="11" height="2.3" rx="1.1"/><rect x="1062" y="731.0" width="11" height="2.3" rx="1.1"/><rect x="1062" y="736.7" width="11" height="2.3" rx="1.1"/><rect x="1062" y="742.4" width="11" height="2.3" rx="1.1"/><rect x="1062" y="748.1" width="11" height="2.3" rx="1.1"/><rect x="1062" y="753.8" width="11" height="2.3" rx="1.1"/><rect x="1062" y="759.5" width="11" height="2.3" rx="1.1"/><rect x="1062" y="765.2" width="11" height="2.3" rx="1.1"/><rect x="1062" y="770.9" width="11" height="2.3" rx="1.1"/><rect x="1062" y="776.6" width="11" height="2.3" rx="1.1"/><rect x="1062" y="782.3" width="11" height="2.3" rx="1.1"/><rect x="1062" y="788.0" width="11" height="2.3" rx="1.1"/><rect x="1062" y="793.7" width="11" height="2.3" rx="1.1"/><rect x="1062" y="799.4" width="11" height="2.3" rx="1.1"/><rect x="1062" y="805.1" width="11" height="2.3" rx="1.1"/><rect x="1083" y="731.0" width="11" height="2.3" rx="1.1"/><rect x="1083" y="736.7" width="11" height="2.3" rx="1.1"/><rect x="1083" y="742.4" width="11" height="2.3" rx="1.1"/><rect x="1083" y="748.1" width="11" height="2.3" rx="1.1"/><rect x="1083" y="753.8" width="11" height="2.3" rx="1.1"/><rect x="1083" y="759.5" width="11" height="2.3" rx="1.1"/><rect x="1083" y="765.2" width="11" height="2.3" rx="1.1"/><rect x="1083" y="770.9" width="11" height="2.3" rx="1.1"/><rect x="1083" y="776.6" width="11" height="2.3" rx="1.1"/><rect x="1083" y="782.3" width="11" height="2.3" rx="1.1"/><rect x="1083" y="788.0" width="11" height="2.3" rx="1.1"/><rect x="1083" y="793.7" width="11" height="2.3" rx="1.1"/><rect x="1083" y="799.4" width="11" height="2.3" rx="1.1"/><rect x="1083" y="805.1" width="11" height="2.3" rx="1.1"/><rect x="1097" y="731.0" width="11" height="2.3" rx="1.1"/><rect x="1097" y="736.7" width="11" height="2.3" rx="1.1"/><rect x="1097" y="742.4" width="11" height="2.3" rx="1.1"/><rect x="1097" y="748.1" width="11" height="2.3" rx="1.1"/><rect x="1097" y="753.8" width="11" height="2.3" rx="1.1"/><rect x="1097" y="759.5" width="11" height="2.3" rx="1.1"/><rect x="1097" y="765.2" width="11" height="2.3" rx="1.1"/><rect x="1097" y="770.9" width="11" height="2.3" rx="1.1"/><rect x="1097" y="776.6" width="11" height="2.3" rx="1.1"/><rect x="1097" y="782.3" width="11" height="2.3" rx="1.1"/><rect x="1097" y="788.0" width="11" height="2.3" rx="1.1"/><rect x="1097" y="793.7" width="11" height="2.3" rx="1.1"/><rect x="1097" y="799.4" width="11" height="2.3" rx="1.1"/><rect x="1097" y="805.1" width="11" height="2.3" rx="1.1"/><rect x="1117" y="731.0" width="11" height="2.3" rx="1.1"/><rect x="1117" y="736.7" width="11" height="2.3" rx="1.1"/><rect x="1117" y="742.4" width="11" height="2.3" rx="1.1"/><rect x="1117" y="748.1" width="11" height="2.3" rx="1.1"/><rect x="1117" y="753.8" width="11" height="2.3" rx="1.1"/><rect x="1117" y="759.5" width="11" height="2.3" rx="1.1"/><rect x="1117" y="765.2" width="11" height="2.3" rx="1.1"/><rect x="1117" y="770.9" width="11" height="2.3" rx="1.1"/><rect x="1117" y="776.6" width="11" height="2.3" rx="1.1"/><rect x="1117" y="782.3" width="11" height="2.3" rx="1.1"/><rect x="1117" y="788.0" width="11" height="2.3" rx="1.1"/><rect x="1117" y="793.7" width="11" height="2.3" rx="1.1"/><rect x="1117" y="799.4" width="11" height="2.3" rx="1.1"/><rect x="1117" y="805.1" width="11" height="2.3" rx="1.1"/><rect x="1131" y="731.0" width="11" height="2.3" rx="1.1"/><rect x="1131" y="736.7" width="11" height="2.3" rx="1.1"/><rect x="1131" y="742.4" width="11" height="2.3" rx="1.1"/><rect x="1131" y="748.1" width="11" height="2.3" rx="1.1"/><rect x="1131" y="753.8" width="11" height="2.3" rx="1.1"/><rect x="1131" y="759.5" width="11" height="2.3" rx="1.1"/><rect x="1131" y="765.2" width="11" height="2.3" rx="1.1"/><rect x="1131" y="770.9" width="11" height="2.3" rx="1.1"/><rect x="1131" y="776.6" width="11" height="2.3" rx="1.1"/><rect x="1131" y="782.3" width="11" height="2.3" rx="1.1"/><rect x="1131" y="788.0" width="11" height="2.3" rx="1.1"/><rect x="1131" y="793.7" width="11" height="2.3" rx="1.1"/><rect x="1131" y="799.4" width="11" height="2.3" rx="1.1"/><rect x="1131" y="805.1" width="11" height="2.3" rx="1.1"/><rect x="1170" y="730.0" width="11" height="2.3" rx="1.1"/><rect x="1170" y="735.7" width="11" height="2.3" rx="1.1"/><rect x="1170" y="741.4" width="11" height="2.3" rx="1.1"/><rect x="1170" y="747.1" width="11" height="2.3" rx="1.1"/><rect x="1170" y="752.8" width="11" height="2.3" rx="1.1"/><rect x="1170" y="758.5" width="11" height="2.3" rx="1.1"/><rect x="1170" y="764.2" width="11" height="2.3" rx="1.1"/><rect x="1170" y="769.9" width="11" height="2.3" rx="1.1"/><rect x="1170" y="775.6" width="11" height="2.3" rx="1.1"/><rect x="1170" y="781.3" width="11" height="2.3" rx="1.1"/><rect x="1170" y="787.0" width="11" height="2.3" rx="1.1"/><rect x="1170" y="792.7" width="11" height="2.3" rx="1.1"/><rect x="1170" y="798.4" width="11" height="2.3" rx="1.1"/><rect x="1170" y="804.1" width="11" height="2.3" rx="1.1"/><rect x="1184" y="730.0" width="11" height="2.3" rx="1.1"/><rect x="1184" y="735.7" width="11" height="2.3" rx="1.1"/><rect x="1184" y="741.4" width="11" height="2.3" rx="1.1"/><rect x="1184" y="747.1" width="11" height="2.3" rx="1.1"/><rect x="1184" y="752.8" width="11" height="2.3" rx="1.1"/><rect x="1184" y="758.5" width="11" height="2.3" rx="1.1"/><rect x="1184" y="764.2" width="11" height="2.3" rx="1.1"/><rect x="1184" y="769.9" width="11" height="2.3" rx="1.1"/><rect x="1184" y="775.6" width="11" height="2.3" rx="1.1"/><rect x="1184" y="781.3" width="11" height="2.3" rx="1.1"/><rect x="1184" y="787.0" width="11" height="2.3" rx="1.1"/><rect x="1184" y="792.7" width="11" height="2.3" rx="1.1"/><rect x="1184" y="798.4" width="11" height="2.3" rx="1.1"/><rect x="1184" y="804.1" width="11" height="2.3" rx="1.1"/><rect x="1205" y="730.0" width="11" height="2.3" rx="1.1"/><rect x="1205" y="735.7" width="11" height="2.3" rx="1.1"/><rect x="1205" y="741.4" width="11" height="2.3" rx="1.1"/><rect x="1205" y="747.1" width="11" height="2.3" rx="1.1"/><rect x="1205" y="752.8" width="11" height="2.3" rx="1.1"/><rect x="1205" y="758.5" width="11" height="2.3" rx="1.1"/><rect x="1205" y="764.2" width="11" height="2.3" rx="1.1"/><rect x="1205" y="769.9" width="11" height="2.3" rx="1.1"/><rect x="1205" y="775.6" width="11" height="2.3" rx="1.1"/><rect x="1205" y="781.3" width="11" height="2.3" rx="1.1"/><rect x="1205" y="787.0" width="11" height="2.3" rx="1.1"/><rect x="1205" y="792.7" width="11" height="2.3" rx="1.1"/><rect x="1205" y="798.4" width="11" height="2.3" rx="1.1"/><rect x="1205" y="804.1" width="11" height="2.3" rx="1.1"/><rect x="1219" y="730.0" width="11" height="2.3" rx="1.1"/><rect x="1219" y="735.7" width="11" height="2.3" rx="1.1"/><rect x="1219" y="741.4" width="11" height="2.3" rx="1.1"/><rect x="1219" y="747.1" width="11" height="2.3" rx="1.1"/><rect x="1219" y="752.8" width="11" height="2.3" rx="1.1"/><rect x="1219" y="758.5" width="11" height="2.3" rx="1.1"/><rect x="1219" y="764.2" width="11" height="2.3" rx="1.1"/><rect x="1219" y="769.9" width="11" height="2.3" rx="1.1"/><rect x="1219" y="775.6" width="11" height="2.3" rx="1.1"/><rect x="1219" y="781.3" width="11" height="2.3" rx="1.1"/><rect x="1219" y="787.0" width="11" height="2.3" rx="1.1"/><rect x="1219" y="792.7" width="11" height="2.3" rx="1.1"/><rect x="1219" y="798.4" width="11" height="2.3" rx="1.1"/><rect x="1219" y="804.1" width="11" height="2.3" rx="1.1"/><rect x="1239" y="730.0" width="11" height="2.3" rx="1.1"/><rect x="1239" y="735.7" width="11" height="2.3" rx="1.1"/><rect x="1239" y="741.4" width="11" height="2.3" rx="1.1"/><rect x="1239" y="747.1" width="11" height="2.3" rx="1.1"/><rect x="1239" y="752.8" width="11" height="2.3" rx="1.1"/><rect x="1239" y="758.5" width="11" height="2.3" rx="1.1"/><rect x="1239" y="764.2" width="11" height="2.3" rx="1.1"/><rect x="1239" y="769.9" width="11" height="2.3" rx="1.1"/><rect x="1239" y="775.6" width="11" height="2.3" rx="1.1"/><rect x="1239" y="781.3" width="11" height="2.3" rx="1.1"/><rect x="1239" y="787.0" width="11" height="2.3" rx="1.1"/><rect x="1239" y="792.7" width="11" height="2.3" rx="1.1"/><rect x="1239" y="798.4" width="11" height="2.3" rx="1.1"/><rect x="1239" y="804.1" width="11" height="2.3" rx="1.1"/><rect x="1253" y="730.0" width="11" height="2.3" rx="1.1"/><rect x="1253" y="735.7" width="11" height="2.3" rx="1.1"/><rect x="1253" y="741.4" width="11" height="2.3" rx="1.1"/><rect x="1253" y="747.1" width="11" height="2.3" rx="1.1"/><rect x="1253" y="752.8" width="11" height="2.3" rx="1.1"/><rect x="1253" y="758.5" width="11" height="2.3" rx="1.1"/><rect x="1253" y="764.2" width="11" height="2.3" rx="1.1"/><rect x="1253" y="769.9" width="11" height="2.3" rx="1.1"/><rect x="1253" y="775.6" width="11" height="2.3" rx="1.1"/><rect x="1253" y="781.3" width="11" height="2.3" rx="1.1"/><rect x="1253" y="787.0" width="11" height="2.3" rx="1.1"/><rect x="1253" y="792.7" width="11" height="2.3" rx="1.1"/><rect x="1253" y="798.4" width="11" height="2.3" rx="1.1"/><rect x="1253" y="804.1" width="11" height="2.3" rx="1.1"/></g>
<!-- rear window -->
<path d="M1289,770 L1320,731 L1356,724 Q1361,728 1360,740 L1358,789 L1349,799 L1303,804 L1290,796 Z" fill="#c4c450" stroke-width="2.4"/>
<path d="M1294,771 L1322,736 L1354,730 L1353,787 L1346,795 L1305,799 L1295,792 Z" fill="none" stroke="#e0e000" stroke-width="1.2"/>
<path d="M1300,765 H1355 M1296,787 H1355" stroke="#80803a" stroke-width="1.2" fill="none"/>
<path d="M1383,700 L1386,790" stroke="#222" stroke-width="2" stroke-dasharray="2 2" fill="none"/>
<!-- bottom band -->
<path d="M903,816 L1060,817 L1260,812 Q1340,810 1375,795 Q1384,785 1384,775 L1387,792 Q1384,808 1350,822 Q1310,830 1260,831 L1060,838 L912,838 Q904,834 903,826 Z" fill="#dcdc00" stroke-width="1.2"/>
<path d="M905,821 L1060,822 L1260,818 Q1340,816 1381,793" fill="none" stroke-width="1"/>
<rect x="938" y="819" width="98" height="18" rx="4" fill="url(#mesh)" stroke-width="1.2"/>
<!-- engine cover -->
<path d="M1167,615 L1179,592 L1290,592 L1321,647 L1335,684 L1335,695 L1185,696 Z" fill="#2c2c2c" stroke-width="1.6"/>
<path d="M1179,592 L1290,592 L1311,662 L1197,662 Z" fill="#3c3c3c" stroke-width="1.2"/>
<path d="M1197,663.5 L1312,663.5" stroke="#a0a0a0" stroke-width="1.6" fill="none"/>
<path d="M1200,679 L1311,679 L1311,694 L1200,694 Z" fill="url(#vslat)" stroke="none"/>
<g><rect x="1189.4" y="594.5" width="94.2" height="6.5" rx="3.2" fill="#2e2e2e" stroke="#000" stroke-width="1.3"/><ellipse cx="1197.0" cy="597.5" rx="7.5" ry="3.6" fill="#3a3a3a" stroke="#000" stroke-width="1.2"/><ellipse cx="1236.5" cy="597.5" rx="7.5" ry="3.6" fill="#3a3a3a" stroke="#000" stroke-width="1.2"/><ellipse cx="1274.2" cy="597.5" rx="7.5" ry="3.6" fill="#3a3a3a" stroke="#000" stroke-width="1.2"/><path d="M1209.4,601.7 H1273.7" stroke="#777" stroke-width="0.8"/><rect x="1192.2" y="605.3" width="94.7" height="6.5" rx="3.2" fill="#2e2e2e" stroke="#000" stroke-width="1.3"/><ellipse cx="1199.8" cy="608.3" rx="7.5" ry="3.6" fill="#3a3a3a" stroke="#000" stroke-width="1.2"/><ellipse cx="1239.5" cy="608.3" rx="7.5" ry="3.6" fill="#3a3a3a" stroke="#000" stroke-width="1.2"/><ellipse cx="1277.4" cy="608.3" rx="7.5" ry="3.6" fill="#3a3a3a" stroke="#000" stroke-width="1.2"/><path d="M1212.2,612.5 H1276.9" stroke="#777" stroke-width="0.8"/><rect x="1195.0" y="616.1" width="95.2" height="6.5" rx="3.2" fill="#2e2e2e" stroke="#000" stroke-width="1.3"/><ellipse cx="1202.6" cy="619.1" rx="7.5" ry="3.6" fill="#3a3a3a" stroke="#000" stroke-width="1.2"/><ellipse cx="1242.5" cy="619.1" rx="7.5" ry="3.6" fill="#3a3a3a" stroke="#000" stroke-width="1.2"/><ellipse cx="1280.6" cy="619.1" rx="7.5" ry="3.6" fill="#3a3a3a" stroke="#000" stroke-width="1.2"/><path d="M1215.0,623.3 H1280.1" stroke="#777" stroke-width="0.8"/><rect x="1197.7" y="626.9" width="95.6" height="6.5" rx="3.2" fill="#2e2e2e" stroke="#000" stroke-width="1.3"/><ellipse cx="1205.4" cy="629.9" rx="7.5" ry="3.6" fill="#3a3a3a" stroke="#000" stroke-width="1.2"/><ellipse cx="1245.6" cy="629.9" rx="7.5" ry="3.6" fill="#3a3a3a" stroke="#000" stroke-width="1.2"/><ellipse cx="1283.8" cy="629.9" rx="7.5" ry="3.6" fill="#3a3a3a" stroke="#000" stroke-width="1.2"/><path d="M1217.7,634.1 H1283.4" stroke="#777" stroke-width="0.8"/><rect x="1200.5" y="637.7" width="96.1" height="6.5" rx="3.2" fill="#2e2e2e" stroke="#000" stroke-width="1.3"/><ellipse cx="1208.2" cy="640.7" rx="7.5" ry="3.6" fill="#3a3a3a" stroke="#000" stroke-width="1.2"/><ellipse cx="1248.6" cy="640.7" rx="7.5" ry="3.6" fill="#3a3a3a" stroke="#000" stroke-width="1.2"/><ellipse cx="1287.0" cy="640.7" rx="7.5" ry="3.6" fill="#3a3a3a" stroke="#000" stroke-width="1.2"/><path d="M1220.5,644.9 H1286.6" stroke="#777" stroke-width="0.8"/><rect x="1203.3" y="648.5" width="96.6" height="6.5" rx="3.2" fill="#2e2e2e" stroke="#000" stroke-width="1.3"/><ellipse cx="1211.0" cy="651.5" rx="7.5" ry="3.6" fill="#3a3a3a" stroke="#000" stroke-width="1.2"/><ellipse cx="1251.6" cy="651.5" rx="7.5" ry="3.6" fill="#3a3a3a" stroke="#000" stroke-width="1.2"/><ellipse cx="1290.2" cy="651.5" rx="7.5" ry="3.6" fill="#3a3a3a" stroke="#000" stroke-width="1.2"/><path d="M1223.3,655.7 H1289.8" stroke="#777" stroke-width="0.8"/></g>
<!-- railing -->
<g fill="none" stroke="#000" stroke-width="4.5">
<path d="M1078,587 L1260,585 Q1330,592 1361,630 L1366,650 Q1352,668 1330,672 L1096,679"/>
</g>
<g fill="none" stroke="#e6e600" stroke-width="2.4">
<path d="M1078,587 L1260,585 Q1330,592 1361,630 L1366,650 Q1352,668 1330,672 L1096,679"/>
</g>
<g stroke="#000" stroke-width="4.5" fill="none">
<path d="M1108,590 V611 M1153,590 V613 M1340,609 V625 M1355,628 V648 M1364,655 V668 M1130,680 V705 M1175,679 V705 M1222,678 V703 M1268,676 V701 M1323,676 V697"/>
</g>
<g stroke="#e0e000" stroke-width="2.4" fill="none">
<path d="M1108,590 V611 M1153,590 V613 M1340,609 V625 M1355,628 V648 M1364,655 V668 M1130,680 V705 M1175,679 V705 M1222,678 V703 M1268,676 V701 M1323,676 V697"/>
</g>

<!-- ===== CAB ===== -->
<!-- glass -->
<path d="M946,589 L1082,589 L1082,702 L1051,705 L1019,742 L973,765 L918,772 L922,710 L933,656 Z" fill="#b2b25a" stroke="none"/>
<path d="M1018,600 L1049,600 L1056,650 L1051,703 L1019,742 Z" fill="#a8a870" stroke="none"/>
<path d="M1018,590 H1050 V615 H1018 Z" fill="#8a8a86" stroke="none"/>
<path d="M1020,634 H1046 L1050,700 L1020,735 Z" fill="#b8b880" stroke="#7a7a5a" stroke-width="1"/>
<path d="M1045,655 L1055,650 L1050,700 L1025,735 L1022,720 Z" fill="#8a8a40" stroke-width="0.8"/>
<path d="M956,595 L992,745 M965,595 L998,740 M1003,600 L980,745 M940,650 L950,745" stroke="#8a8a70" stroke-width="2" fill="none"/>
<!-- interior -->
<path d="M921,712 L945,705 L962,765 L919,772 Z" fill="#3a3a3a" stroke-width="1"/>
<path d="M940,762 L978,698 L992,705 L958,768 Z" fill="#3a3a3a" stroke-width="1"/>
<path d="M938,731 Q945,708 957,689 M951,738 Q958,716 970,698" stroke="#000" stroke-width="5" fill="none"/>
<path d="M938,731 Q945,708 957,689 M951,738 Q958,716 970,698" stroke="#e0e000" stroke-width="3" fill="none"/>
<circle cx="984" cy="708" r="10" fill="#d4d4dc" stroke="none"/>
<ellipse cx="970" cy="682" rx="21" ry="8" transform="rotate(33 970 682)" fill="none" stroke="#000" stroke-width="3"/>
<path d="M982,714 L1005,712 L1008,745 L985,758 Z" fill="#a8a800" stroke-width="1"/>
<path d="M984,730 L1006,728 L1007,736 L985,739 Z" fill="#d0d000" stroke-width="0.8"/>
<path d="M958,738 L982,736 L983,749 L959,751 Z" fill="#d8d800" stroke-width="1"/>
<path d="M962,740 L1000,735 L1003,760 L965,766 Z" fill="#3a3a3a" stroke-width="1"/>
<!-- pillars -->
<path d="M926,589 L949,589 L933,656 L922,710 L918,772 L918,814 L905,811 L903,719 L910,649 Z" fill="#000" stroke="none"/>
<rect x="1005" y="589" width="13" height="153" fill="#000" stroke="none"/>
<path d="M1049,589 L1081,589 L1082,703 L1051,703 L1056,650 Z" fill="#000" stroke="none"/>
<!-- lower door -->
<path d="M918,772 L973,765 L1019,742 L1051,705 L1082,702 L1070,726 L1044,712 L1044,814 L918,814 Z" fill="#c0c000" stroke="none"/>
<path d="M1073,704 L1091,723 L1070,726 Z" fill="#e0e000" stroke-width="1"/>
<path d="M918,772 L973,765 L1019,742 L1051,705" fill="none" stroke-width="1.8"/>
<path d="M1051,705 Q1028,730 1021,770 L1019,814" fill="none" stroke-width="1.6"/>
<path d="M959,785 L965,778 L993,777 L993,791 L962,792 Z" fill="#333" stroke-width="1.2"/>
<!-- front light -->
<path d="M880,757 L895,756 L897,795 L880,795 Q874,775 880,757 Z" fill="#f0f000" stroke-width="1.2"/>
<path d="M921,589 Q905,630 901,690 L899,816" fill="none" stroke-width="1.2"/>
<path d="M922,592 Q912,620 908,660 L913,660 Q917,625 926,592 Z" fill="#3a3a3a" stroke="none"/>
<path d="M896,712 L901,710 L904,821 L898,821 Z" fill="#d8d800" stroke-width="1.1"/>
<path d="M872,756 L879,754 L879,798 L872,797 Z" fill="#2a2a2a" stroke-width="1"/>
<!-- cab outline -->
<path d="M926,589 L910,649 L903,719 L905,811" fill="none" stroke-width="1.6"/>
<!-- boom above roof -->

<!-- roof -->
<path d="M919,548 L1056,548 Q1068,552 1069,562 L1071,585 L922,586 L920,567 Z" fill="#e8e800" stroke-width="1.4"/>
<path d="M937,554 L937,567" stroke-width="1" fill="none"/>
<path d="M1056,548 Q1068,552 1069,562 L1071,585 L1062,585 L1059,558 Z" fill="#f4f400" stroke-width="1"/>
<path d="M918,541 L945,541 Q952,544 953,554 L920,554 Z" fill="#c4c400" stroke-width="1.4"/>
<path d="M920,567 L948,567 Q955,572 955,581 L921,581 Z" fill="#c4c400" stroke-width="1.4"/>
<path d="M920,554 L922,586" fill="none" stroke-width="1.2"/>
<path d="M922,586 L1072,585 L1072,591 L922,591 Z" fill="#111" stroke="none"/>
<path d="M963,546 L1003,545 L1038,553 L1041,576 L967,577 Z" fill="#3a3a3a" stroke-width="1.4"/>
<path d="M1003,545 L1006,569 M968,569 L1006,569 L1041,576" stroke="#888" stroke-width="1" fill="none"/>
</g>
<!-- triad -->
<g>
<path d="M46,938 V915" stroke="#10d010" stroke-width="3"/>
<path d="M41,917 L46,906 L51,917 Z" fill="#10d010"/>
<path d="M46,938 L70,938" stroke="#d01010" stroke-width="3"/>
<path d="M66,933 L75,938 L66,943 Z" fill="#d01010"/>
<path d="M46,938 L36,945" stroke="#1010c0" stroke-width="4"/>
<path d="M31,948 L40,940 L38,948 Z" fill="#1010c0"/>
<text x="43" y="902" font-family="Liberation Sans" font-size="7" fill="#40c040">Y</text>
</g>
<text x="21" y="990" font-family="Liberation Sans" font-weight="bold" font-size="13" fill="#111" textLength="60" lengthAdjust="spacingAndGlyphs">*Dimetric</text>
<!-- left side tab -->
<rect x="10" y="513" width="9" height="37" fill="#f4f4f4"/>
<circle cx="14" cy="531" r="2.5" fill="none" stroke="#666" stroke-width="0.8"/>
</svg>
</div>
<div id="task" class="abs">
<svg class="abs" style="left:0;top:0" width="1920" height="40" viewBox="0 0 1920 40">
<!-- start -->
<path d="M16,13 L23,12 V19.5 H16 Z M24,11.8 L32,10.5 V19.5 H24 Z M16,20.5 H23 V28 L16,27 Z M24,20.5 H32 V29.5 L24,28.2 Z" fill="#fff"/>
<rect x="48" y="0" width="343" height="40" fill="#f0f0f0"/>
<rect x="48" y="0" width="343" height="1" fill="#c8c8c8"/>
<circle cx="73" cy="18" r="5.2" fill="none" stroke="#222" stroke-width="1.4"/>
<path d="M69.5,21.5 L61,29.5" stroke="#222" stroke-width="1.5"/>
<text x="88" y="25.5" font-family="Liberation Sans" font-size="14.5" fill="#222">Type here to search</text>
<!-- cortana -->
<circle cx="416" cy="20" r="7" fill="none" stroke="#fff" stroke-width="1.6"/>
<!-- task view -->
<g fill="none" stroke="#fff" stroke-width="1.2">
<rect x="457.5" y="15.5" width="10" height="9"/>
<path d="M456,12.5 H469 M456,27.5 H469 M471.5,12 V29"/>
</g>
<rect x="469.5" y="16" width="3" height="3" fill="#fff"/>
<!-- edge -->
<circle cx="514" cy="20" r="12" fill="#1b8ad8"/>
<path d="M503,16 Q508,6 519,8 Q527,10 526,20 Q520,21 516,20 Q512,17 508,20 Q506,24 511,29 Q505,28 503,22 Z" fill="#3cc4b0"/>
<path d="M508,21 Q510,16 515,17 Q517,20 514,22 Q510,23 508,21 Z" fill="#1a2a48"/>
<!-- explorer -->
<path d="M552,13 H560 L562,15 H574 V30 H552 Z" fill="#f4c542"/>
<path d="M552,18 H574 V30 H552 Z" fill="#fbd868"/>
<path d="M557,30 V23 H569 V30 H566 V26 H560 V30 Z" fill="#3a8ad0"/>
<!-- store -->
<rect x="601" y="13" width="23" height="19" fill="#f0f0f0"/>
<path d="M608,13 V9 Q608,7 610,7 H615 Q617,7 617,9 V13" fill="none" stroke="#f0f0f0" stroke-width="2"/>
<rect x="607" y="18" width="5" height="5" fill="#f25022"/><rect x="613" y="18" width="5" height="5" fill="#7fba00"/>
<rect x="607" y="24" width="5" height="5" fill="#00a4ef"/><rect x="613" y="24" width="5" height="5" fill="#ffb900"/>
<!-- mail -->
<path d="M650,16 L662,7 L674,16 V30 H650 Z" fill="#1e7fd0"/>
<path d="M650,16 L662,24 L674,16 V30 H650 Z" fill="#3cb4f0"/>
<path d="M652,15 H672 L662,22 Z" fill="#fff"/>
<!-- cmd -->
<rect x="698.5" y="10.5" width="22" height="18" fill="#000" stroke="#bbb"/>
<rect x="699" y="11" width="21" height="2" fill="#ccc"/>
<text x="701" y="20" font-family="Liberation Mono" font-size="6" fill="#ddd">C:\</text>
<rect x="710" y="20" width="8" height="1.2" fill="#ddd"/>
<!-- hex app -->
<path d="M760,8 L770,14 V26 L760,32 L750,26 V14 Z" fill="#3a4050" stroke="#8a9ab0" stroke-width="1"/>
<path d="M753,26 L767,14" stroke="#4a8ae8" stroke-width="2"/>
<!-- window app -->
<rect x="798" y="11" width="22" height="18" fill="#e8eef6"/>
<rect x="804" y="13" width="9" height="14" fill="#1a78e0"/>
<!-- solidworks -->
<path d="M846,12 L858,7 L870,12 V28 L858,33 L846,28 Z" fill="#d81e28"/>
<path d="M846,12 L858,17 V33 L846,28 Z" fill="#b01018"/>
<text x="849" y="26" font-family="Liberation Sans" font-weight="bold" font-size="12" fill="#fff">S</text>
<text x="859" y="24" font-family="Liberation Sans" font-weight="bold" font-size="11" fill="#fff">W</text>
<text x="850" y="34" font-family="Liberation Sans" font-weight="bold" font-size="8" fill="#fff">2021</text>
<!-- running underlines -->
<rect x="691" y="38" width="38" height="2" fill="#7fb4e6"/>
<rect x="740" y="38" width="40" height="2" fill="#7fb4e6"/>
<rect x="789" y="38" width="40" height="2" fill="#7fb4e6"/>
<rect x="838" y="38" width="40" height="2" fill="#7fb4e6"/>
<!-- tray -->
<path d="M1713,23 L1718.5,17.5 L1724,23" fill="none" stroke="#fff" stroke-width="1.3"/>
<g fill="none" stroke="#fff" stroke-width="1.1">
<rect x="1738.5" y="15.5" width="6" height="8" rx="1"/>
<path d="M1745,18 L1748,16 V23 L1745,21"/>
<path d="M1739,13 Q1743,11 1747,13 M1739,26 Q1743,28 1747,26"/>
</g>
<g fill="none" stroke="#fff" stroke-width="1.2">
<path d="M1763,26 Q1768,16 1775,15 M1765,26 Q1769,19 1774,18 M1767.5,26 Q1770,22 1773,21"/>
</g>
<circle cx="1772.5" cy="25" r="1.2" fill="#fff"/>
<g fill="none" stroke="#fff" stroke-width="1.1">
<path d="M1783.5,18 H1786 L1789.5,14.5 V25.5 L1786,22 H1783.5 Z"/>
<path d="M1791.5,17.5 Q1793,20 1791.5,22.5 M1793.5,15.5 Q1796,20 1793.5,24.5 M1795.5,13.5 Q1799,20 1795.5,26.5"/>
</g>
<text x="1835" y="15" text-anchor="middle" font-family="Liberation Sans" font-size="12" fill="#fff">11:44 AM</text>
<text x="1835" y="32.5" text-anchor="middle" font-family="Liberation Sans" font-size="12" fill="#fff">1/29/2021</text>
<path d="M1879.5,12.5 H1895.5 V25 H1885 L1882,28 V25 H1879.5 Z" fill="#fff"/>
<path d="M1882,16 H1893 M1882,19 H1893 M1882,22 H1889" stroke="#1c2a48" stroke-width="1"/>
<circle cx="1894" cy="26.5" r="6.3" fill="#2a2a2a" stroke="#888" stroke-width="1"/>
<text x="1894" y="30.5" text-anchor="middle" font-family="Liberation Sans" font-weight="bold" font-size="10" fill="#fff">2</text>
<rect x="1915" y="0" width="1" height="40" fill="#6a7a90"/>
</svg>
</div>
</body></html>
